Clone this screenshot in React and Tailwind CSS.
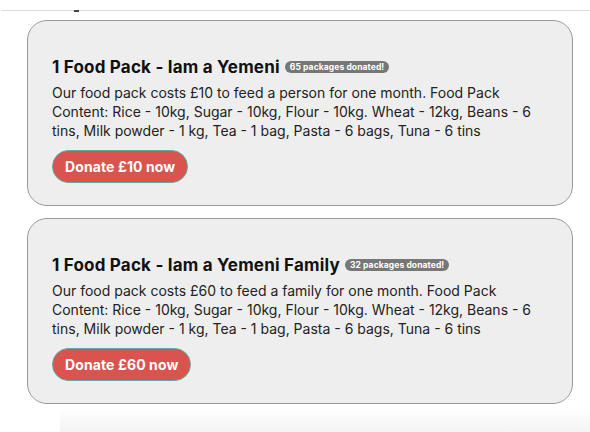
import React from 'react';

const packs = [
  {
    title: '1 Food Pack - Iam a Yemeni',
    count: 65,
    text: 'Our food pack costs £10 to feed a person for one month. Food Pack Content: Rice - 10kg, Sugar - 10kg, Flour - 10kg. Wheat - 12kg, Beans - 6 tins, Milk powder - 1 kg, Tea - 1 bag, Pasta - 6 bags, Tuna - 6 tins',
    price: 10,
  },
  {
    title: '1 Food Pack - Iam a Yemeni Family',
    count: 32,
    text: 'Our food pack costs £60 to feed a family for one month. Food Pack Content: Rice - 10kg, Sugar - 10kg, Flour - 10kg. Wheat - 12kg, Beans - 6 tins, Milk powder - 1 kg, Tea - 1 bag, Pasta - 6 bags, Tuna - 6 tins',
    price: 60,
  },
];

function PackCard({ pack }) {
  return (
    <div className="rounded-[20px] border border-[#999] bg-[#eee] pl-[24px] pr-[20px] pt-[34px] pb-[22px] font-['Inter',sans-serif]">
      <h3 className="flex items-center gap-[5px] text-[17px] leading-[24px] font-bold tracking-[0.2px] text-[#111]">
        {pack.title}
        <span className="rounded-full bg-[#777] px-[5px] text-[8.5px] leading-[12px] font-bold tracking-[0.1px] text-white">
          {pack.count} packages donated!
        </span>
      </h3>
      <p className="mt-[4px] text-[14px] leading-[19px] text-[#222]">{pack.text}</p>
      <button className="mt-[10px] h-[33px] rounded-full border border-[#5fa9a0] bg-[#d9534f] px-[12px] text-[14px] font-bold tracking-[0.1px] text-white">
        Donate £{pack.price} now
      </button>
    </div>
  );
}

export default function App() {
  return (
    <div className="relative h-[432px] w-[590px] overflow-hidden bg-white">
      <div className="h-[11px] border-b border-[#ddd] ml-[1px]">
        <div className="ml-[73px] pt-[10px] h-[1px]"><div className="h-[2px] w-[5px] bg-[#444]" /></div>
      </div>
      <div className="ml-[27px] mr-[17px] mt-[9px] flex flex-col gap-[12px]">
        {packs.map(p => <PackCard key={p.price} pack={p} />)}
      </div>
      <div className="absolute left-[60px] right-0 bottom-0 h-[26px] bg-gradient-to-b from-white to-[#f4f4f4]" />
    </div>
  );
}
